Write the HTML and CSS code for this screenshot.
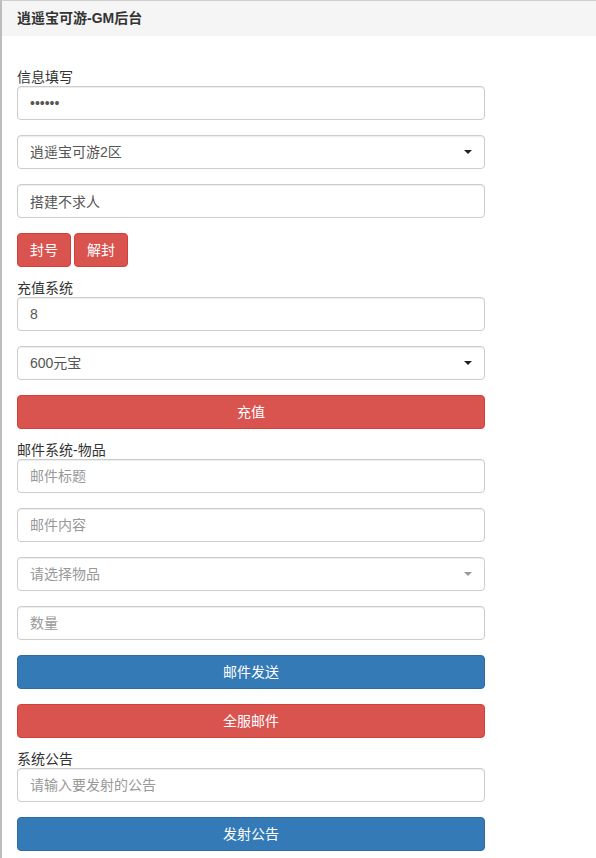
FILE: index.html
```html
<!DOCTYPE html>
<html lang="zh-CN">
<head>
<meta charset="utf-8">
<title>逍遥宝可游-GM后台</title>
<link rel="stylesheet" href="styles.css">
</head>
<body>
<div class="panel">
  <div class="panel-heading">逍遥宝可游-GM后台</div>
  <div class="panel-body">
    <form class="form">
      <label class="label first">信息填写</label>
      <div class="group"><input class="control" type="password" value="123456"></div>
      <div class="group select-wrap">
        <select class="control"><option>逍遥宝可游2区</option></select>
        <span class="caret"></span>
      </div>
      <div class="group"><input class="control" type="text" value="搭建不求人"></div>
      <div class="group btn-row">
        <button type="button" class="btn btn-danger">封号</button>
        <button type="button" class="btn btn-danger">解封</button>
      </div>

      <label class="label">充值系统</label>
      <div class="group"><input class="control" type="text" value="8"></div>
      <div class="group select-wrap">
        <select class="control"><option>600元宝</option></select>
        <span class="caret"></span>
      </div>
      <div class="group"><button type="button" class="btn btn-danger btn-block">充值</button></div>

      <label class="label">邮件系统-物品</label>
      <div class="group"><input class="control" type="text" placeholder="邮件标题"></div>
      <div class="group"><input class="control" type="text" placeholder="邮件内容"></div>
      <div class="group select-wrap">
        <select class="control placeholder"><option>请选择物品</option></select>
        <span class="caret light"></span>
      </div>
      <div class="group"><input class="control" type="text" placeholder="数量"></div>
      <div class="group"><button type="button" class="btn btn-primary btn-block">邮件发送</button></div>
      <div class="group"><button type="button" class="btn btn-danger btn-block">全服邮件</button></div>

      <label class="label">系统公告</label>
      <div class="group"><input class="control" type="text" placeholder="请输入要发射的公告"></div>
      <div class="group last"><button type="button" class="btn btn-primary btn-block">发射公告</button></div>
    </form>
  </div>
</div>
</body>
</html>
```
FILE: styles.css
```css
html, body {
  margin: 0;
  padding: 0;
  background: #fff;
}
body {
  font-family: "Liberation Sans", Arial, "Noto Sans CJK SC", sans-serif;
  font-size: 14px;
  line-height: 20px;
  color: #333;
}
.panel {
  border-top: 1px solid #cfcfcf;
  border-left: 2px solid #bdbdbd;
  height: 857px;
  overflow: hidden;
}
.panel-heading {
  height: 35px;
  line-height: 35px;
  padding: 0 15px;
  background: #f5f5f5;
  font-weight: bold;
  color: #333;
}
.panel-body {
  padding: 0 15px;
}
.form {
  width: 468px;
  display: flex;
  flex-direction: column;
}
.label {
  display: block;
  height: 20px;
  line-height: 22px;
  margin-top: -5px;
  color: #333;
}
.label.first {
  margin-top: 30px;
}
.group {
  margin-bottom: 15px;
}
.group.last {
  margin-bottom: 0;
}
.control {
  display: block;
  box-sizing: border-box;
  width: 100%;
  height: 34px;
  padding: 6px 12px;
  font-family: "Liberation Sans", Arial, "Noto Sans CJK SC", sans-serif;
  font-size: 14px;
  line-height: 20px;
  color: #555;
  background: #fff;
  border: 1px solid #ccc;
  border-radius: 4px;
  box-shadow: inset 0 1px 1px rgba(0, 0, 0, .075);
  outline: none;
  -webkit-appearance: none;
  appearance: none;
  margin: 0;
}
.control::placeholder {
  color: #999;
}
select.control.placeholder {
  color: #999;
}
.select-wrap {
  position: relative;
}
.caret {
  position: absolute;
  right: 13px;
  top: 15px;
  width: 0;
  height: 0;
  border-left: 4px solid transparent;
  border-right: 4px solid transparent;
  border-top: 4px solid #222;
}
.caret.light {
  border-top-color: #999;
}
.btn-row {
  display: flex;
  gap: 3px;
}
.btn {
  box-sizing: border-box;
  height: 34px;
  padding: 6px 12px;
  font-family: "Liberation Sans", Arial, "Noto Sans CJK SC", sans-serif;
  font-size: 14px;
  line-height: 20px;
  color: #fff;
  border: 1px solid transparent;
  border-radius: 4px;
  margin: 0;
  cursor: pointer;
}
.btn-block {
  display: block;
  width: 100%;
}
.btn-danger {
  background: #d9534f;
  border-color: #d43f3a;
}
.btn-primary {
  background: #337ab7;
  border-color: #2e6da4;
}
```
